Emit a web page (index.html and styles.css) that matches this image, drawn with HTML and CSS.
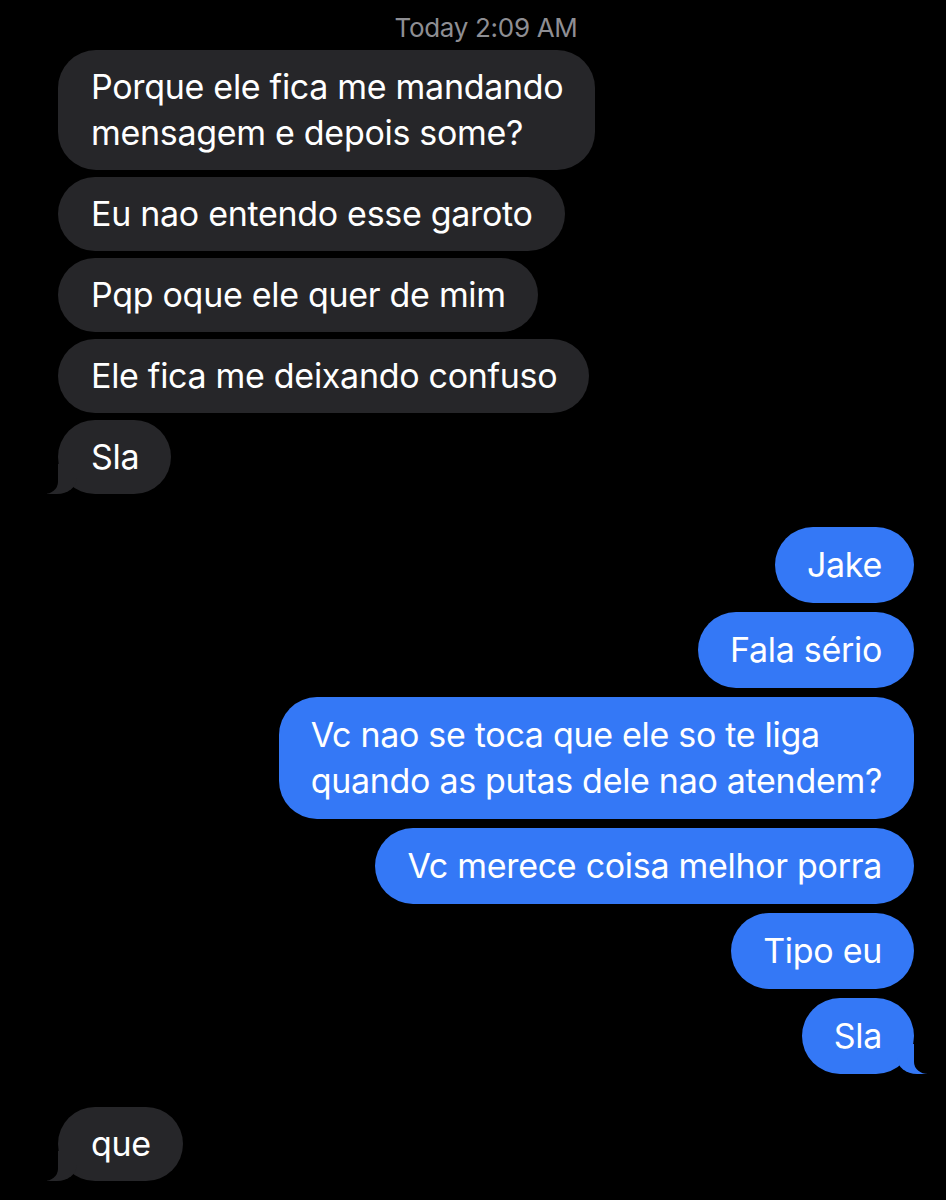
FILE: index.html
```html
<!DOCTYPE html>
<html lang="pt">
<head>
    <meta charset="UTF-8">
    <meta name="viewport" content="width=device-width, initial-scale=1.0">
    <title>Mensagens</title>
    <link rel="stylesheet" href="styles.css">
</head>
<body>

<div class="chat">
    <div class="time">Today 2:09 AM</div>

    <!-- mensagens recebidas -->
    <div class="msg in">Porque ele fica me mandando<br>mensagem e depois some?</div>
    <div class="msg in">Eu nao entendo esse garoto</div>
    <div class="msg in">Pqp oque ele quer de mim</div>
    <div class="msg in">Ele fica me deixando confuso</div>
    <div class="msg in tail last-in">Sla</div>

    <!-- mensagens enviadas -->
    <div class="msg out">Jake</div>
    <div class="msg out">Fala sério</div>
    <div class="msg out">Vc nao se toca que ele so te liga<br>quando as putas dele nao atendem?</div>
    <div class="msg out">Vc merece coisa melhor porra</div>
    <div class="msg out">Tipo eu</div>
    <div class="msg out tail">Sla</div>

    <div class="msg in tail gap-top">que</div>
</div>

</body>
</html>
```

FILE: styles.css
```css
body {
    margin: 0;
    background-color: #000;
    font-family: Inter, "Liberation Sans", Arial, sans-serif;
    color: #fff;
}
.chat {
    display: flex;
    flex-direction: column;
    padding: 12px 32px 20px 58px;
}
.time {
    align-self: center;
    color: #8e8e93;
    font-size: 26px;
    line-height: 32px;
    letter-spacing: -0.3px;
    margin-bottom: 6px;
}
.msg {
    position: relative;
    font-size: 34px;
    line-height: 46px;
    letter-spacing: -0.3px;
    padding: 14px 32px 14px 33px;
    border-radius: 38px;
    margin-bottom: 7px;
}
.in {
    align-self: flex-start;
    background-color: #262629;
}
.out {
    align-self: flex-end;
    background-color: #3478f6;
    padding: 15px 32px 15px 32px;
    margin-bottom: 9px;
}
.last-in {
    margin-bottom: 33px;
}
.gap-top {
    margin-top: 24px;
}

/* rabinho do balão */
.tail::before,
.tail::after {
    content: "";
    position: absolute;
    bottom: 0;
    height: 30px;
}
.in.tail::before {
    left: -11px;
    width: 30px;
    background-color: #262629;
    border-bottom-right-radius: 20px 16px;
}
.in.tail::after {
    left: -24px;
    width: 24px;
    background-color: #000;
    border-bottom-right-radius: 14px 12px;
}
.out.tail::before {
    right: -13px;
    width: 30px;
    background-color: #3478f6;
    border-bottom-left-radius: 20px 16px;
}
.out.tail::after {
    right: -26px;
    width: 26px;
    background-color: #000;
    border-bottom-left-radius: 14px 12px;
}
```
